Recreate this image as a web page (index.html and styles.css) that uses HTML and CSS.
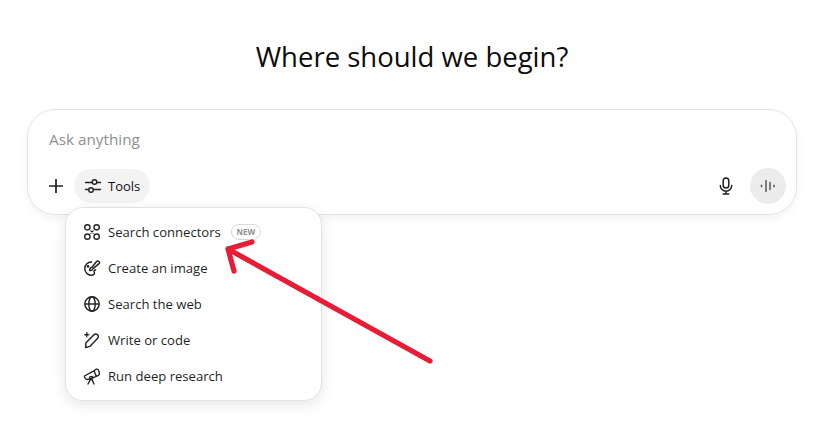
FILE: index.html
```html
<!DOCTYPE html>
<html lang="en">
<head>
    <meta charset="UTF-8">
    <title>Where should we begin?</title>
    <link rel="stylesheet" href="styles.css">
</head>
<body>
    <div class="page">
        <h1 class="title">Where should we begin?</h1>

        <div class="composer">
            <div class="prompt">Ask anything</div>
            <div class="actions">
                <div class="actions-left">
                    <span class="icon-btn">
                        <svg width="20" height="20" viewBox="0 0 20 20" fill="none" stroke="#1f1f1f" stroke-width="1.7"><path d="M10 3v14M3 10h14"/></svg>
                    </span>
                    <span class="tools-btn">
                        <svg width="18" height="18" viewBox="0 0 18 18" fill="none" stroke="#222" stroke-width="1.4" stroke-linecap="round"><path d="M1.500 5.500h6.500M13 5.500H16.500M1.500 12.500h3M9.500 12.500H16.500"/><circle cx="10.500" cy="5" r="2.300"/><circle cx="7" cy="13" r="2.300"/></svg>
                        Tools
                    </span>
                </div>
                <div class="actions-right">
                    <span class="icon-btn">
                        <svg width="20" height="20" viewBox="0 0 20 20" fill="none" stroke="#1f1f1f" stroke-width="1.5" stroke-linecap="round"><rect x="7.200" y="2" width="5.600" height="10" rx="2.800"/><path d="M4.300 9.500a5.700 5.700 0 0 0 11.400 0M10 15.200V18M7.200 18h5.600"/></svg>
                    </span>
                    <span class="voice-btn">
                        <svg width="18" height="18" viewBox="0 0 18 18" fill="none" stroke="#555" stroke-width="1.500" stroke-linecap="round"><path d="M2.500 8.300v1.400M7 3.500v11M11 5.500v7M15 8.300v1.400"/></svg>
                    </span>
                </div>
            </div>

            <ul class="menu">
                <li class="menu-item">
                    <svg class="menu-icon" viewBox="0 0 20 20" fill="none" stroke="#222" stroke-width="1.700"><circle cx="4.200" cy="4.200" r="3.300"/><circle cx="15.800" cy="4.200" r="3.300"/><circle cx="4.200" cy="15.800" r="3.300"/><circle cx="15.800" cy="15.800" r="3.300"/><path d="M8 8l4 4M12 8l-4 4" stroke-width="1.300"/></svg>
                    <span>Search connectors</span>
                    <span class="badge">NEW</span>
                </li>
                <li class="menu-item">
                    <svg class="menu-icon" viewBox="0 0 20 20" fill="none" stroke="#222" stroke-width="1.800" stroke-linecap="round" stroke-linejoin="round"><path d="M9.500 2.500A8 8 0 0 0 1 10.500c0 4.500 3.600 8.500 8 8.500 3.500 0 4.800-2 3.800-3.700-.7-1.200-.2-2.500 1.700-2.700"/><path d="M19 2.200l-1.200-.8c-.9-.5-1.800 0-2.400.8L10 9c-1.800.4-3 1.800-3 4 2.300.5 4-.6 4.600-2.500l7.200-6c.9-.8.9-1.700.2-2.300z"/><circle cx="5" cy="8" r=".8"/></svg>
                    <span>Create an image</span>
                </li>
                <li class="menu-item">
                    <svg class="menu-icon" viewBox="0 0 20 20" fill="none" stroke="#222" stroke-width="1.800"><circle cx="10" cy="10" r="9"/><ellipse cx="10" cy="10" rx="4" ry="9"/><path d="M1 10h18"/></svg>
                    <span>Search the web</span>
                </li>
                <li class="menu-item">
                    <svg class="menu-icon" viewBox="0 0 20 20" fill="none" stroke="#222" stroke-width="1.800" stroke-linejoin="round"><path d="M2.500 13.500L11.800 4c1.500-1.500 3.600-1.800 5-.7 1.500 1.200 1.500 3.300 0 4.800L7.300 18 2 19.500z"/><path d="M3.500 0l.9 2.600L7 3.500l-2.600.9L3.500 7l-.9-2.600L0 3.500l2.600-.9z" fill="#222" stroke-width=".5"/></svg>
                    <span>Write or code</span>
                </li>
                <li class="menu-item">
                    <svg class="menu-icon" viewBox="0 0 20 20" fill="none" stroke="#222" stroke-width="1.700" stroke-linecap="round" stroke-linejoin="round"><path d="M.5 10l12-6.500 3 7-10.500 3.800c-2 .5-5-2.500-4.500-4.300z"/><path d="M13 3.500c.9-2 3.800-3 4.900-1 1.100 2 1.700 5 .6 6.500-.7.900-1.700 1-2.800.7"/><circle cx="9" cy="12.500" r="2"/><path d="M8 14.500l-3 5.500M10 14.500l2.500 5.500"/></svg>
                    <span>Run deep research</span>
                </li>
            </ul>
        </div>

        <svg class="arrow" width="821" height="421" viewBox="0 0 821 421" fill="none" stroke="#e71c36" stroke-width="5.200" stroke-linecap="round" stroke-linejoin="round">
            <path d="M430 361L228 249M252 242L228 249L234 271"/>
        </svg>
    </div>
</body>
</html>
```

FILE: styles.css
```css
* {
    box-sizing: border-box;
}

body {
    margin: 0;
    background: #fff;
    font-family: 'Open Sans', 'Noto Sans', sans-serif;
    color: #1f1f1f;
}

.page {
    position: relative;
    width: 821px;
    height: 421px;
    padding: 39px 24px 0 27px;
    overflow: hidden;
}

.title {
    margin: 0 0 34px;
    font-size: 27.500px;
    line-height: 36px;
    font-weight: 400;
    text-align: center;
    color: #0d0d0d;
}

.composer {
    position: relative;
    width: 770px;
    height: 106px;
    border: 1px solid #e3e3e3;
    border-radius: 28px;
    box-shadow: 0 4px 8px rgba(0, 0, 0, 0.05);
    padding: 18px 10px 0 10px;
}

.prompt {
    padding-left: 11px;
    font-size: 15.300px;
    line-height: 22px;
    color: #8f8f8f;
}

.actions {
    display: flex;
    justify-content: space-between;
    align-items: center;
    margin-top: 18px;
}

.actions-left,
.actions-right {
    display: flex;
    align-items: center;
}

.actions-right {
    gap: 6px;
}

.icon-btn {
    display: flex;
    align-items: center;
    justify-content: center;
    width: 36px;
    height: 36px;
}

.tools-btn {
    display: flex;
    align-items: center;
    gap: 6px;
    height: 34px;
    padding: 0 10px;
    border-radius: 17px;
    background: #f3f3f3;
    font-size: 13px;
    color: #111;
}

.voice-btn {
    display: flex;
    align-items: center;
    justify-content: center;
    width: 36px;
    height: 36px;
    border-radius: 50%;
    background: #ececec;
}

.menu {
    position: absolute;
    left: 37px;
    top: 97px;
    width: 257px;
    height: 194px;
    margin: 0;
    padding: 6px 0;
    list-style: none;
    background: #fff;
    border: 1px solid #e3e3e3;
    border-radius: 18px;
    box-shadow: 0 4px 14px rgba(0, 0, 0, 0.1);
}

.menu-item {
    display: flex;
    align-items: center;
    gap: 8px;
    height: 36px;
    padding-left: 18px;
    font-size: 13.100px;
    color: #1f1f1f;
}

.menu-icon {
    width: 16px;
    height: 16px;
    overflow: visible;
}

.badge {
    margin-left: 2px;
    width: 30px;
    height: 16px;
    line-height: 14px;
    text-align: center;
    border: 1px solid #d9d9d9;
    border-radius: 8px;
    font-family: 'Noto Sans', sans-serif;
    font-size: 8px;
    font-weight: 700;
    color: #8f8f8f;
}

.arrow {
    position: absolute;
    left: 0;
    top: 0;
    pointer-events: none;
}
```
